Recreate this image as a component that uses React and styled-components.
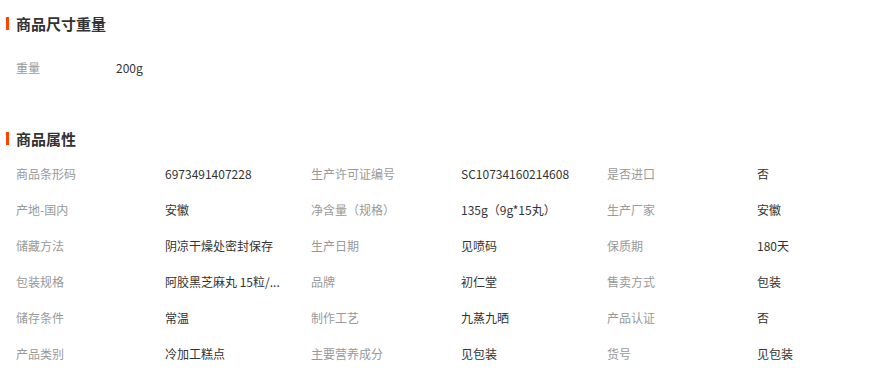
import React from "react";
import styled, { createGlobalStyle } from "styled-components";

const GlobalStyle = createGlobalStyle`
	body {
		margin: 0;
		background: #fff;
		font-family: "Noto Sans CJK SC", "Liberation Sans", sans-serif;
		font-size: 12px;
		color: #333;
	}
`;

const weight = [["重量", "200g"]];

// the long value is shown already shortened, as in the page
const attrs = [
	["商品条形码", "6973491407228", "生产许可证编号", "SC10734160214608", "是否进口", "否"],
	["产地-国内", "安徽", "净含量（规格）", "135g（9g*15丸）", "生产厂家", "安徽"],
	["储藏方法", "阴凉干燥处密封保存", "生产日期", "见喷码", "保质期", "180天"],
	["包装规格", "阿胶黑芝麻丸 15粒/...", "品牌", "初仁堂", "售卖方式", "包装"],
	["储存条件", "常温", "制作工艺", "九蒸九晒", "产品认证", "否"],
	["产品类别", "冷加工糕点", "主要营养成分", "见包装", "货号", "见包装"],
];

const App = () => {
	return (
		<>
			<GlobalStyle />
			<Page>
				<Section>
					<Title>商品尺寸重量</Title>
					<WeightList>
						{weight.map(([k, v]) => (
							<WeightRow key={k}>
								<Label>{k}</Label>
								<Value>{v}</Value>
							</WeightRow>
						))}
					</WeightList>
				</Section>
				<Section $gap={44}>
					<Title>商品属性</Title>
					<AttrGrid>
						{attrs.flat().map((text, i) =>
							i % 2 === 0 ? <Label key={i}>{text}</Label> : <Value key={i}>{text}</Value>
						)}
					</AttrGrid>
				</Section>
			</Page>
		</>
	);
};

const Page = styled.div`
	width: 874px;
	padding: 14px 6px 0;
	box-sizing: border-box;
`;

const Section = styled.section`
	margin-top: ${(p) => p.$gap || 0}px;
`;

const Title = styled.h3`
	position: relative;
	margin: 0;
	height: 20px;
	line-height: 20px;
	padding-left: 10px;
	font-size: 15px;
	font-weight: bold;
	color: #333;
	&::before {
		content: "";
		position: absolute;
		left: 0;
		top: 3px;
		width: 3px;
		height: 13px;
		background: #ff4400;
	}
`;

const WeightList = styled.div`
	margin-top: 15px;
	padding-left: 10px;
`;

const WeightRow = styled.div`
	display: grid;
	grid-template-columns: 100px auto;
	height: 36px;
	align-items: center;
`;

const AttrGrid = styled.div`
	margin-top: 6px;
	padding-left: 10px;
	display: grid;
	grid-template-columns: 149px 146px 150px 146px 150px 1fr;
	grid-auto-rows: 36px;
	align-items: center;
`;

const Label = styled.span`
	color: #999;
	white-space: nowrap;
`;

const Value = styled.span`
	color: #333;
	white-space: nowrap;
`;

export default App;
